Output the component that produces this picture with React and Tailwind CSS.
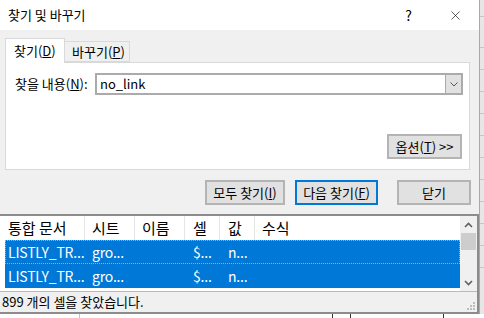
import { X } from 'lucide-react';

function Btn({ children, w, primary }) {
  return (
    <div
      className={`h-[25px] ${w} flex items-center justify-center bg-[#e1e1e1] text-[13px] ${
        primary ? 'border-2 border-[#0078d7]' : 'border-2 border-[#b4b4b4]'
      }`}
    >
      {children}
    </div>
  );
}

const cols = [
  { w: 'w-[80px]', pl: 'pl-[3px]' },
  { w: 'w-[50px]', pl: 'pl-[7px]' },
  { w: 'w-[50px]', pl: 'pl-[7px]' },
  { w: 'w-[35px]', pl: 'pl-[8px]' },
  { w: 'w-[35px]', pl: 'pl-[8px]' },
  { w: 'flex-1', pl: 'pl-[7px]' },
];

const header = ['통합 문서', '시트', '이름', '셀', '값', '수식'];
const rows = [
  ['LISTLY_TR...', 'gro...', '', '$...', 'n...', ''],
  ['LISTLY_TR...', 'gro...', '', '$...', 'n...', ''],
];

export default function App() {
  return (
    <div className="w-[484px] h-[318px] flex flex-col bg-[#e9e9e9] overflow-hidden font-['Noto_Sans_CJK_KR',sans-serif] text-black">
      <div className="flex h-[314px]">
        {/* Dialog */}
        <div className="w-[479px] flex flex-col bg-[#f0f0f0]">
          {/* Title bar */}
          <div className="h-[30px] bg-white flex items-center pl-[8px] shrink-0">
            <span className="text-[13px]">찾기 및 바꾸기</span>
            <span className="ml-auto text-[14px] mr-[36px]">?</span>
            <X className="w-[15px] h-[15px] mr-[16px]" strokeWidth={1} />
          </div>

          {/* Body */}
          <div className="h-[184px] pt-[8px] px-[5px] flex flex-col shrink-0">
            {/* Tabs */}
            <div className="h-[24px] flex items-end">
              <div className="w-[60px] h-[25px] bg-white border border-[#d9d9d9] border-b-0 relative z-10 mb-[-1px] flex items-center pl-[8px] text-[13px]">
                찾기(<span className="underline">D</span>)
              </div>
              <div className="w-[65px] h-[21px] bg-[#f0f0f0] border border-[#d9d9d9] border-l-0 flex items-center pl-[7px] text-[13px]">
                바꾸기(<span className="underline">P</span>)
              </div>
            </div>

            {/* Panel */}
            <div className="w-[465px] h-[108px] bg-white border border-[#d9d9d9] flex flex-col pl-[9px] pr-[6px] pt-[10px] pb-[10px]">
              <div className="flex items-center h-[22px]">
                <div className="w-[80px] text-[13px]">
                  찾을 내용(<span className="underline">N</span>):
                </div>
                <div className="flex-1 h-[22px] border-2 border-[#ababab] flex items-center">
                  <span className="pl-[3px] text-[13px]">no_link</span>
                  <div className="ml-auto w-[16px] h-full bg-[#e1e1e1] border-l border-[#ababab] flex items-center justify-center">
                    <svg width="8" height="5" viewBox="0 0 8 5">
                      <path d="M0.5 0.5 L4 4 L7.5 0.5" fill="none" stroke="#555" strokeWidth="1" />
                    </svg>
                  </div>
                </div>
              </div>
              <div className="mt-auto flex justify-end pr-[1px]">
                <Btn w="w-[75px]">
                  <span>
                    옵션(<span className="underline">T</span>) &gt;&gt;
                  </span>
                </Btn>
              </div>
            </div>

            {/* Buttons */}
            <div className="mt-[10px] flex justify-end pr-[3px]">
              <Btn w="w-[80px]">
                <span>
                  모두 찾기(<span className="underline">I</span>)
                </span>
              </Btn>
              <div className="w-[10px]" />
              <Btn w="w-[83px]" primary>
                <span>
                  다음 찾기(<span className="underline">F</span>)
                </span>
              </Btn>
              <div className="w-[19px]" />
              <Btn w="w-[74px]">닫기</Btn>
            </div>
          </div>

          {/* Results */}
          <div className="h-[100px] border-2 border-l-0 border-[#8c8c8c] flex flex-col shrink-0">
            <div className="h-[75px] bg-white flex shrink-0">
              <div className="flex-1 pl-[5px] flex flex-col">
                <div className="h-[24px] flex items-center text-[15px]">
                  {header.map((h, i) => (
                    <div
                      key={i}
                      className={`${cols[i].w} ${cols[i].pl} h-full flex items-center ${
                        i < 5 ? 'border-r border-[#e5e5e5]' : ''
                      }`}
                    >
                      {h}
                    </div>
                  ))}
                </div>
                {rows.map((r, ri) => (
                  <div
                    key={ri}
                    className={`h-[24px] flex items-center bg-[#0078d7] text-white text-[14px] ${
                      ri === 0 ? 'outline outline-1 outline-dotted outline-[#f39a3c] -outline-offset-1' : ''
                    }`}
                  >
                    {r.map((c, i) => (
                      <div key={i} className={`${cols[i].w} ${cols[i].pl} whitespace-nowrap tracking-[-0.2px]`}>
                        {c}
                      </div>
                    ))}
                  </div>
                ))}
              </div>
              {/* Scrollbar */}
              <div className="w-[17px] bg-[#f0f0f0] flex flex-col items-center">
                <div className="h-[17px] flex items-center justify-center">
                  <svg width="9" height="6" viewBox="0 0 9 6">
                    <path d="M1 5 L4.5 1.5 L8 5" fill="none" stroke="#606060" strokeWidth="1.6" />
                  </svg>
                </div>
                <div className="w-[15px] h-[17px] bg-[#cdcdcd]" />
                <div className="mt-auto h-[17px] flex items-center justify-center">
                  <svg width="9" height="6" viewBox="0 0 9 6">
                    <path d="M1 1 L4.5 4.5 L8 1" fill="none" stroke="#606060" strokeWidth="1.6" />
                  </svg>
                </div>
              </div>
            </div>
            <div className="flex-1 border-t border-[#b9b9b9] bg-[#f0f0f0] flex items-center pl-[2px] text-[13px] relative">
              899 개의 셀을 찾았습니다.
              <div className="ml-auto mr-[2px] self-end mb-[2px] grid grid-cols-3 gap-[1px]">
                <span className="w-[2px] h-[2px]" />
                <span className="w-[2px] h-[2px]" />
                <span className="w-[2px] h-[2px] bg-[#bdbdbd]" />
                <span className="w-[2px] h-[2px]" />
                <span className="w-[2px] h-[2px] bg-[#bdbdbd]" />
                <span className="w-[2px] h-[2px] bg-[#bdbdbd]" />
                <span className="w-[2px] h-[2px] bg-[#bdbdbd]" />
                <span className="w-[2px] h-[2px] bg-[#bdbdbd]" />
                <span className="w-[2px] h-[2px] bg-[#bdbdbd]" />
              </div>
            </div>
          </div>
        </div>

        {/* Excel sheet behind */}
        <div className="flex-1 border-l border-[#a9a9a9] bg-[#e6e6e6] flex flex-col">
          <div className="h-[17px] border-b border-[#c6c6c6]" />
          <div className="h-[31px] border-b border-[#c6c6c6]" />
          <div className="h-[22px] border-b border-[#c6c6c6]" />
          <div className="h-[22px] border-b border-[#c6c6c6]" />
          <div className="h-[22px] border-b border-[#c6c6c6]" />
          <div className="h-[22px] border-b border-[#c6c6c6]" />
          <div className="h-[22px] border-b border-[#c6c6c6]" />
          <div className="h-[22px] border-b border-[#c6c6c6]" />
          <div className="h-[22px] border-b border-[#c6c6c6]" />
          <div className="h-[22px] border-b border-[#c6c6c6]" />
          <div className="h-[22px] border-b border-[#c6c6c6]" />
          <div className="h-[22px] border-b border-[#c6c6c6]" />
        </div>
      </div>
      <div className="flex-1 bg-white flex">
        <div className="w-[80px] border-r border-[#c6c6c6]" />
        <div className="w-[253px] border-r border-[#333]" />
        <div className="w-[18px] border-r border-[#333]" />
        <div className="w-[93px] border-r border-[#333]" />
      </div>
    </div>
  );
}
